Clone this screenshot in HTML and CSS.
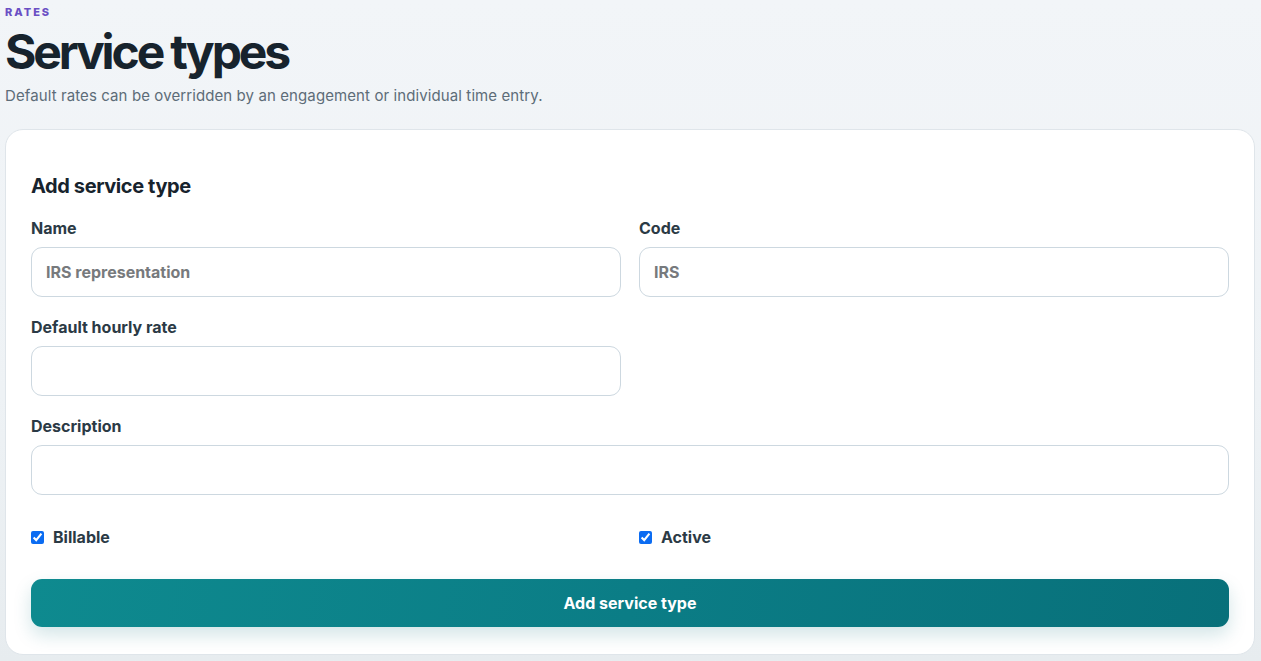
FILE: index.html
```html
<!DOCTYPE html>
<html lang="en">
<head>
<meta charset="utf-8">
<title>Service types</title>
<link rel="stylesheet" href="styles.css">
</head>
<body>
<div class="page">
  <header class="page-head">
    <div class="eyebrow">RATES</div>
    <h1 class="title">Service types</h1>
    <p class="subtitle">Default rates can be overridden by an engagement or individual time entry.</p>
  </header>
  <section class="card">
    <h2 class="card-title">Add service type</h2>
    <form class="form">
      <div class="field">
        <label class="label">Name</label>
        <input class="input" type="text" placeholder="IRS representation">
      </div>
      <div class="field">
        <label class="label">Code</label>
        <input class="input" type="text" placeholder="IRS">
      </div>
      <div class="field">
        <label class="label">Default hourly rate</label>
        <input class="input" type="text">
      </div>
      <div class="field empty"></div>
      <div class="field full">
        <label class="label">Description</label>
        <input class="input" type="text">
      </div>
      <label class="check"><input type="checkbox" checked> <span>Billable</span></label>
      <label class="check"><input type="checkbox" checked> <span>Active</span></label>
      <button type="button" class="btn full">Add service type</button>
    </form>
  </section>
</div>
</body>
</html>
```

FILE: styles.css
```css
* { box-sizing: border-box; }
html, body { margin: 0; padding: 0; }
body {
  font-family: Inter, "Noto Sans", sans-serif;
  background: linear-gradient(180deg, #f2f5f8 0%, #eef2f5 60%, #e7ecef 100%);
  color: #17232d;
  min-height: 661px;
}
.page { padding: 5px 6px 6px 5px; }
.eyebrow {
  font-size: 11px;
  font-weight: 800;
  letter-spacing: 0.18em;
  color: #6a4fc4;
  line-height: 14px;
}
.title {
  margin: 5px 0 0;
  font-size: 48px;
  line-height: 56px;
  font-weight: 700;
  letter-spacing: -0.065em;
  color: #17232d;
}
.subtitle {
  margin: 6px 0 0;
  font-size: 15px;
  line-height: 20px;
  letter-spacing: 0.1px;
  color: #5d6c78;
}
.card {
  margin-top: 23px;
  background: #fff;
  border: 1px solid #dfe5ea;
  border-radius: 18px;
  padding: 43px 25px 27px;
}
.card-title {
  margin: 0 0 19px;
  font-size: 20px;
  line-height: 26px;
  font-weight: 700;
  letter-spacing: -0.02em;
  color: #17232d;
}
.form {
  display: grid;
  grid-template-columns: 1fr 1fr;
  column-gap: 18px;
  row-gap: 20px;
}
.field { display: flex; flex-direction: column; gap: 9px; }
.full { grid-column: 1 / -1; }
.label {
  font-size: 16px;
  line-height: 20px;
  font-weight: 700;
  color: #2b3a45;
}
.input {
  height: 50px;
  border: 1px solid #cdd8e0;
  border-radius: 11px;
  padding: 0 14px;
  font: 700 16px Inter, sans-serif;
  color: #17232d;
  background: #fff;
  outline: none;
}
.input::placeholder { color: #777a7d; }
.check {
  margin-top: 12px;
  display: flex;
  align-items: center;
  gap: 9px;
  font-size: 16px;
  line-height: 20px;
  font-weight: 700;
  color: #2b3a45;
}
.check input {
  margin: 0;
  width: 13px;
  height: 13px;
  accent-color: #0b6cf2;
}
.btn {
  margin-top: 12px;
  height: 48px;
  border: 0;
  border-radius: 11px;
  background: linear-gradient(100deg, #0e8a8f 0%, #0b7d86 50%, #08707a 100%);
  color: #fff;
  font: 700 16px Inter, sans-serif;
  box-shadow: 0 8px 18px rgba(10, 110, 120, 0.18);
  cursor: pointer;
}
```
